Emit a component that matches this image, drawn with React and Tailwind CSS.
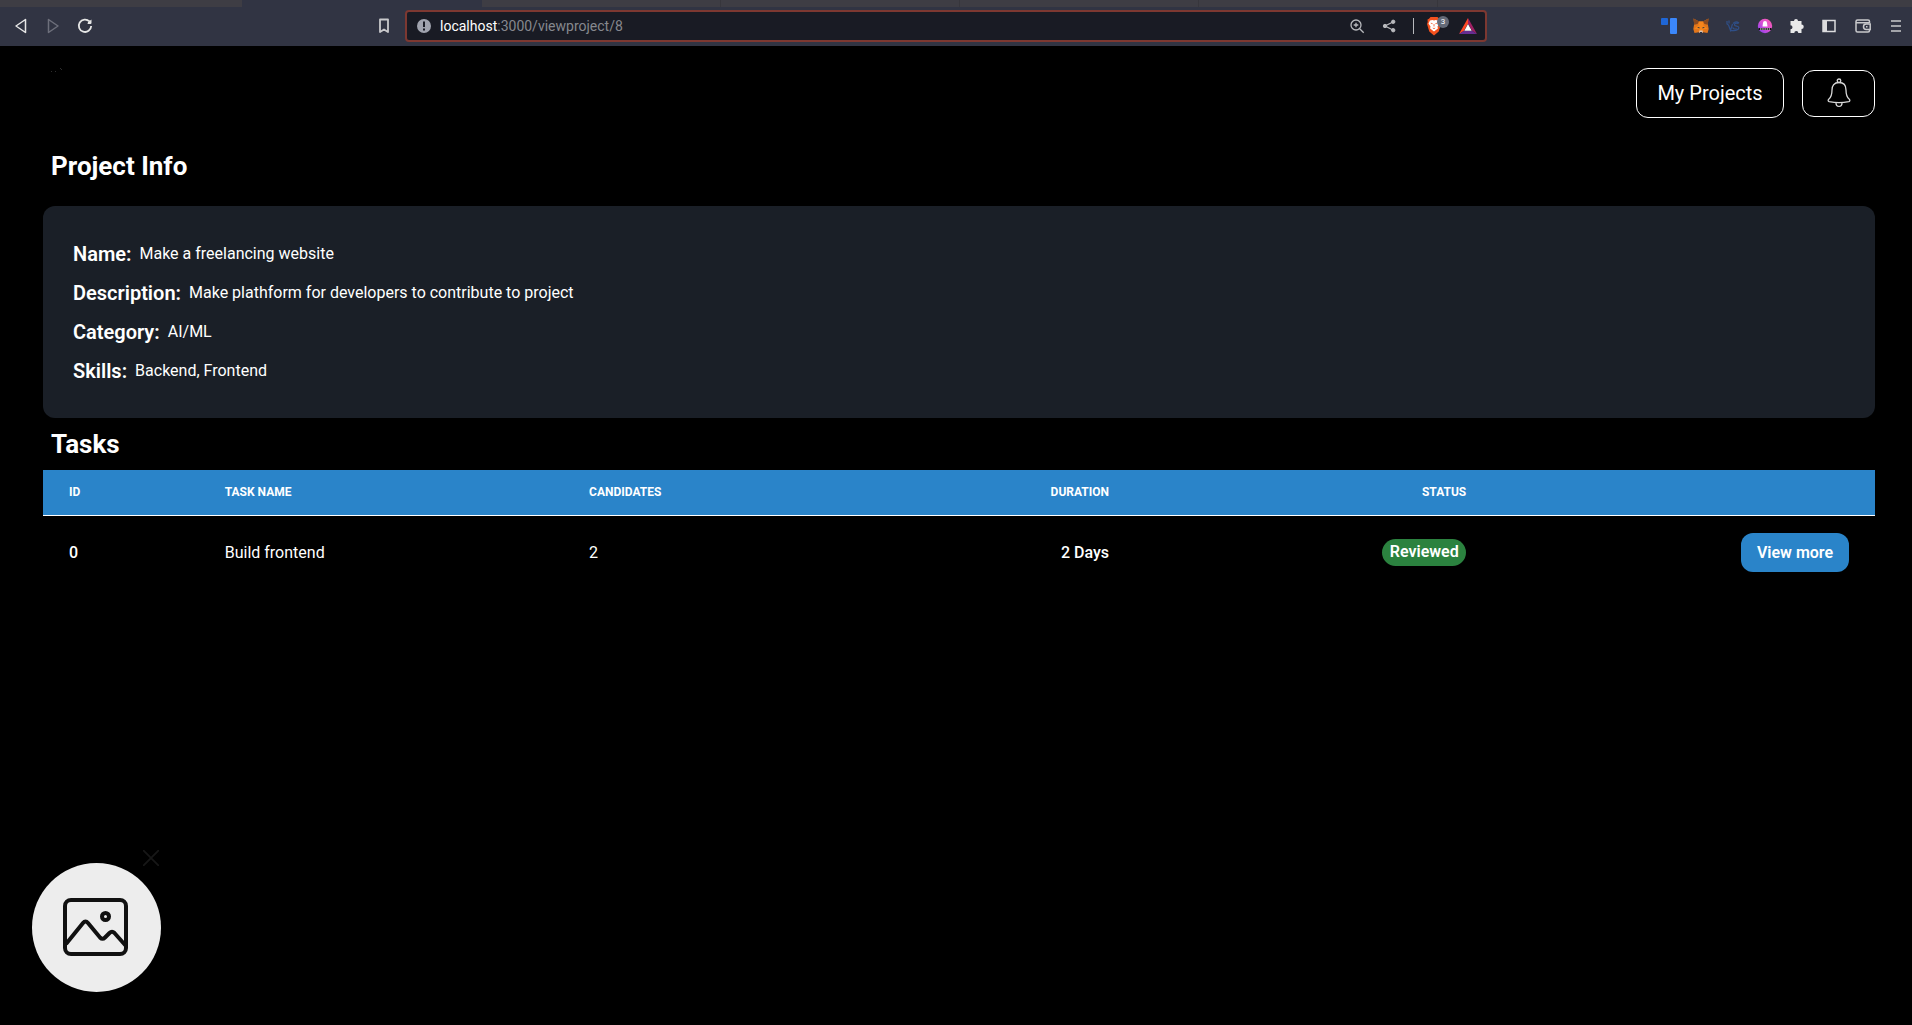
const details = [
  { label: "Name:", value: "Make a freelancing website" },
  { label: "Description:", value: "Make plathform for developers to contribute to project" },
  { label: "Category:", value: "AI/ML" },
  { label: "Skills:", value: "Backend, Frontend" },
];

const tasks = [{ id: 0, name: "Build frontend", candidates: 2, duration: "2 Days", status: "Reviewed" }];

function IconButton({ label, children, className = "" }) {
  return (
    <button type="button" aria-label={label} className={`flex h-8 w-8 shrink-0 items-center justify-center ${className}`}>
      {children}
    </button>
  );
}

function ShieldIcon() {
  return (
    <svg width="16" height="20" viewBox="0 0 16 20">
      <path d="M4.500 1h7l1.500 1.800 1.500.7-.2 2.500.7 2-2.300 7.500L8 19.500l-4.700-4L1 8l.7-2-.2-2.500L3 2.800Z" fill="#f4511e" />
      <path d="M4 4.500 6.500 4 8 4.600 9.500 4l2.500.5 1.500 3-2 3 .4 2L8 15.500 4.100 12.500l.4-2-2-3Z" fill="#fff" />
      <path d="m4.800 7.200 1.800.5M11.200 7.200l-1.800.5M8 8v2.500M6.800 12 8 12.700l1.200-.7" fill="none" stroke="#f4511e" strokeWidth=".8" />
    </svg>
  );
}

function TriangleIcon() {
  return (
    <svg width="18" height="16" viewBox="0 0 18 16">
      <path d="M9 0 0 16l5-3.200L9 5.500Z" fill="#ff4724" />
      <path d="M9 0v5.500l4 7.300 5 3.200Z" fill="#9e1f63" />
      <path d="M0 16h18l-5-3.200H5Z" fill="#662d91" />
      <path d="m9 6 3.700 6.800H5.300Z" fill="#fff" />
    </svg>
  );
}

function FoxIcon() {
  return (
    <svg width="16" height="16" viewBox="0 0 16 16">
      <path d="m.5.5 5.500 3h4l5.500-3-.7 5.500.9 5-1.200 4-4.300-.7-1 .7H6.800l-1-.7-4.300.7-1.200-4L1.200 6Z" fill="#e2761b" />
      <path d="m.5.5 5.500 3L4.500 6l-3.300.8ZM15.500.5l-5.500 3L11.500 6l3.300.8Z" fill="#8a4a20" />
      <path d="M6 3.500 5.500 7.500 1 11h4.500l1 2.500h3l1-2.500H15l-4.500-3.500L10 3.500Z" fill="#f6851b" />
      <path d="M4 9.500 6.300 9l.2 1.500ZM12 9.500 9.700 9l-.2 1.500Z" fill="#233447" />
      <path d="M6.500 12.500h3l.6 2H5.900Z" fill="#d7c1b3" />
      <path d="M7 14h2v1H7Z" fill="#233447" />
    </svg>
  );
}

function ScribbleIcon() {
  return (
    <svg width="14" height="12" viewBox="0 0 14 12" fill="none" stroke="#2f4f88" strokeWidth="1.200">
      <path d="M1 1v3l1.500 1M3 .5v3M2.500 5 4.500 10.500 6.500 4M7 3.500c2-2 4-2 6-.5M12.500 3.500c-2-.8-4.500-.2-4 1.500s4 .5 4.300 2.500-2.500 3.200-5 3.200H5" />
      <path d="M6.500 7.500 8 9h3" />
    </svg>
  );
}

function OrbIcon() {
  return (
    <svg width="16" height="16" viewBox="0 0 16 16">
      <defs>
        <linearGradient id="orb" x1="1" y1="0" x2="0" y2="1">
          <stop offset="0" stopColor="#ff5fa8" />
          <stop offset="0.500" stopColor="#d94fd6" />
          <stop offset="1" stopColor="#7b3ff2" />
        </linearGradient>
      </defs>
      <circle cx="8" cy="8" r="7.200" fill="url(#orb)" />
      <path d="M5.500 8.500 6 5a2 2 0 0 1 4 0l.5 3.500Z" fill="#fff" />
      <path d="M1.500 10h13v2h-13Z" fill="#111" />
      <path d="M3 11h10" stroke="#fff" strokeDasharray="1.500 .7" />
    </svg>
  );
}

function BellIcon() {
  return (
    <svg width="24" height="30" viewBox="0 0 24 30" fill="none" stroke="#d8d8d8" strokeWidth="1.300">
      <circle cx="12" cy="2.800" r="1.800" />
      <path d="M12 4.500c-5 0-7 3.200-7 7.500 0 5.500-1 7.500-3.300 9.300-.9.800-.7 2 .5 2.400 5.500 1.100 14.100 1.100 19.600 0 1.200-.4 1.400-1.600.5-2.400C20 19.500 19 17.500 19 12c0-4.300-2-7.500-7-7.500Z" />
      <path d="M9 24.700c0 5 6 5 6 0" />
    </svg>
  );
}

function BrowserBar() {
  return (
    <div className="bg-[#313443] text-[#e6e6e6]">
      <div className="flex h-[7px]">
        <div className="w-[242px] bg-[#3e3d44]" />
        <div className="w-[240px]" />
        <div className="flex flex-1 bg-[#3e3d44]">
          <div className="w-[239px] border-r border-[#37363c]" />
          <div className="w-[239px] border-r border-[#37363c]" />
          <div className="w-[239px] border-r border-[#37363c]" />
          <div className="w-[239px] border-r border-[#37363c]" />
        </div>
      </div>
      <div className="flex h-[39px] items-start pt-[3px]">
        <div className="flex w-[405px] shrink-0 items-center pl-[5px]">
          <IconButton label="Back">
            <svg width="14" height="16" viewBox="0 0 14 16" fill="none" stroke="currentColor" strokeWidth="1.500" strokeLinejoin="round">
              <path d="M11.500 1.500v13L2 8Z" />
            </svg>
          </IconButton>
          <IconButton label="Forward" className="text-[#6d6f7b]">
            <svg width="14" height="16" viewBox="0 0 14 16" fill="none" stroke="currentColor" strokeWidth="1.500" strokeLinejoin="round">
              <path d="M2.500 1.500v13L12 8Z" />
            </svg>
          </IconButton>
          <IconButton label="Reload">
            <svg width="16" height="16" viewBox="0 0 16 16" fill="none" stroke="currentColor" strokeWidth="1.800">
              <path d="M12.500 3.500A6.200 6.200 0 1 0 14.200 8" />
              <path d="M10 5.500h4.500V1.500Z" fill="currentColor" stroke="none" />
              <path d="M13 2.500v2.500h-2" />
            </svg>
          </IconButton>
          <IconButton label="Bookmark" className="ml-auto mr-[5px]">
            <svg width="12" height="16" viewBox="0 0 12 16" fill="none" stroke="#c9c9cc" strokeWidth="1.800">
              <path d="M2 1.500h8v12.500L6 11.500l-4 2.500Z" strokeLinejoin="round" />
            </svg>
          </IconButton>
        </div>
        <div className="flex h-8 w-[1082px] min-w-0 items-center rounded border-2 border-[#7d3831] bg-[#191b24] pl-[9px]">
          <svg width="16" height="16" viewBox="0 0 16 16" className="shrink-0">
            <circle cx="8" cy="8" r="7" fill="#a0a3ae" />
            <path d="M8 3.500v5.500M8 10.500v2" stroke="#191b24" strokeWidth="2" />
          </svg>
          <div className="ml-2 flex-1 text-sm text-[#86888e]">
            <span className="text-white">localhost</span>:3000/viewproject/8
          </div>
          <IconButton label="Zoom">
            <svg width="16" height="16" viewBox="0 0 16 16" fill="none" stroke="#b8b9bd" strokeWidth="1.300">
              <circle cx="7" cy="7" r="5" />
              <path d="m10.700 10.700 4 4M7 4.700v4.600M4.700 7h4.600" />
            </svg>
          </IconButton>
          <IconButton label="Share">
            <svg width="14" height="14" viewBox="0 0 14 14" fill="#b8b9bd" stroke="#b8b9bd">
              <path d="M11 3 3 7l8 4" fill="none" strokeWidth="1.300" />
              <circle cx="11.200" cy="2.800" r="1.700" />
              <circle cx="3" cy="7" r="1.700" />
              <circle cx="11.200" cy="11.200" r="1.700" />
            </svg>
          </IconButton>
          <div className="ml-2 mr-1 h-4 w-px bg-[#b8b9bd]" />
          <IconButton label="Shields" className="relative">
            <ShieldIcon />
            <span className="absolute left-[19px] top-[6px] flex h-3 w-3 items-center justify-center rounded-full bg-[#646a78] text-[8px] text-white">3</span>
          </IconButton>
          <IconButton label="Rewards" className="ml-0.5 mr-px">
            <TriangleIcon />
          </IconButton>
        </div>
        <div className="ml-auto flex items-center">
          <IconButton label="Boards">
            <svg width="16" height="16" viewBox="0 0 16 16">
              <rect width="7" height="7" rx="1" fill="#1f66d6" />
              <rect x="9" width="7" height="16" rx="1" fill="#3b87fb" />
            </svg>
          </IconButton>
          <IconButton label="Fox wallet">
            <FoxIcon />
          </IconButton>
          <IconButton label="Scribble">
            <ScribbleIcon />
          </IconButton>
          <IconButton label="Orb">
            <OrbIcon />
          </IconButton>
          <IconButton label="Extensions">
            <svg width="16" height="16" viewBox="0 0 16 16" fill="#e9e9ea">
              <path d="M5 3a2 2 0 0 1 4 0h3.500v3.500a2 2 0 0 1 0 4.500v4H9.300a2 2 0 0 0-4 0H1.500v-3.800a2 2 0 0 0 0-4V3Z" />
            </svg>
          </IconButton>
          <IconButton label="Sidebar">
            <svg width="14" height="14" viewBox="0 0 14 14">
              <rect x="1" y="1.500" width="12" height="11" fill="none" stroke="#dcdcde" strokeWidth="1.500" />
              <path d="M1 1.500h4v11H1Z" fill="#dcdcde" />
            </svg>
          </IconButton>
          <IconButton label="Wallet" className="ml-0.5">
            <svg width="16" height="14" viewBox="0 0 16 14" fill="none" stroke="#c9c9cc" strokeWidth="1.500">
              <path d="M14.500 4V2.500a1.500 1.500 0 0 0-1.500-1.500H2.500A1.500 1.500 0 0 0 1 2.500v9A1.500 1.500 0 0 0 2.500 13H13a1.500 1.500 0 0 0 1.500-1.500V11M1 3.700h13.500" />
              <path d="M15.200 5h-4a2.700 2.700 0 0 0 0 5.400h4ZM11 7.700h1.500" />
            </svg>
          </IconButton>
          <IconButton label="Menu" className="ml-px">
            <svg width="10" height="12" viewBox="0 0 10 12" stroke="#c9c9cc" strokeWidth="1.500">
              <path d="M0 1h10M0 6h10M0 11h10" />
            </svg>
          </IconButton>
        </div>
      </div>
    </div>
  );
}

function Header() {
  return (
    <header className="flex h-[72px] items-center justify-between pt-[22px]">
      <svg width="14" height="6" viewBox="0 0 14 6" fill="#2e2e2e" className="ml-2 self-start">
        <path d="M0 3h1v1H0ZM4 3h1v1H4ZM9 0h1v1H9ZM10 1h1v1h-1Z" />
      </svg>
      <div className="flex items-center gap-[18px]">
        <button type="button" className="h-[50px] w-[148px] rounded-xl border border-white text-xl">
          My Projects
        </button>
        <button type="button" aria-label="Notifications" className="flex h-[47px] w-[73px] items-center justify-center rounded-xl border border-white">
          <BellIcon />
        </button>
      </div>
    </header>
  );
}

function TaskTable() {
  return (
    <table className="w-full table-fixed text-left">
      <thead className="h-[45px] border-b border-white bg-[#2a84c9] text-xs uppercase">
        <tr>
          <th className="w-[8.5%] px-[26px] font-bold">ID</th>
          <th className="w-[20%] px-[26px] font-bold">Task name</th>
          <th className="w-[15.5%] px-6 font-bold">Candidates</th>
          <th className="w-[15.5%] px-6 text-right font-bold">Duration</th>
          <th className="w-[19.5%] px-6 text-right font-bold">Status</th>
          <th className="w-[21%]" />
        </tr>
      </thead>
      <tbody>
        {tasks.map((task) => (
          <tr key={task.id} className="h-[75px]">
            <td className="px-[26px] font-medium">{task.id}</td>
            <td className="px-[26px]">{task.name}</td>
            <td className="px-6">{task.candidates}</td>
            <td className="px-6 text-right font-medium">{task.duration}</td>
            <td className="px-6">
              <span className="ml-auto flex h-[27px] w-[84px] items-center justify-center rounded-full bg-[#2b823f] pb-0.5 font-semibold">
                {task.status}
              </span>
            </td>
            <td className="px-[26px]">
              <button type="button" className="ml-auto block h-[39px] w-[108px] rounded-xl bg-[#2a84c9] font-semibold">
                View more
              </button>
            </td>
          </tr>
        ))}
      </tbody>
    </table>
  );
}

function ImageBubble() {
  return (
    <div className="fixed bottom-[33px] left-8">
      <button type="button" aria-label="Open image" className="flex h-[129px] w-[129px] items-center justify-center rounded-full bg-[#ededed] pr-0.5 pb-0.5">
        <svg width="66" height="58" viewBox="0 0 66 58" fill="none" stroke="#111" strokeWidth="4">
          <rect x="2" y="2" width="61" height="54" rx="6" />
          <path d="M3 46 20 25q2.500-3 5 0l12 14.500q2.500 2.500 5 0l4.500-4.500q2.500-2.500 5 0L63 48" />
          <circle cx="42.500" cy="18.500" r="3.500" />
        </svg>
      </button>
      <button type="button" aria-label="Close" className="absolute left-[111px] top-[-13px]">
        <svg width="16" height="16" viewBox="0 0 16 16" stroke="#171717" strokeWidth="1.800">
          <path d="m0 0 16 16M16 0 0 16" />
        </svg>
      </button>
    </div>
  );
}

export default function App() {
  return (
    <div className="min-h-screen bg-black font-[Roboto,sans-serif] text-white">
      <BrowserBar />
      <main className="pl-[43px] pr-[37px]">
        <Header />
        <h2 className="px-2 pb-[22px] pt-[30px] text-[26px] leading-[36px] font-bold">Project Info</h2>
        <section className="rounded-xl bg-[#1a1f27] px-[30px] py-7">
          {details.map(({ label, value }) => (
            <p key={label} className="flex h-[39px] items-center gap-2">
              <span className="text-xl font-semibold">{label}</span>
              <span>{value}</span>
            </p>
          ))}
        </section>
        <h2 className="px-2 py-2 text-[26px] leading-[36px] font-bold">Tasks</h2>
        <TaskTable />
      </main>
      <ImageBubble />
    </div>
  );
}
